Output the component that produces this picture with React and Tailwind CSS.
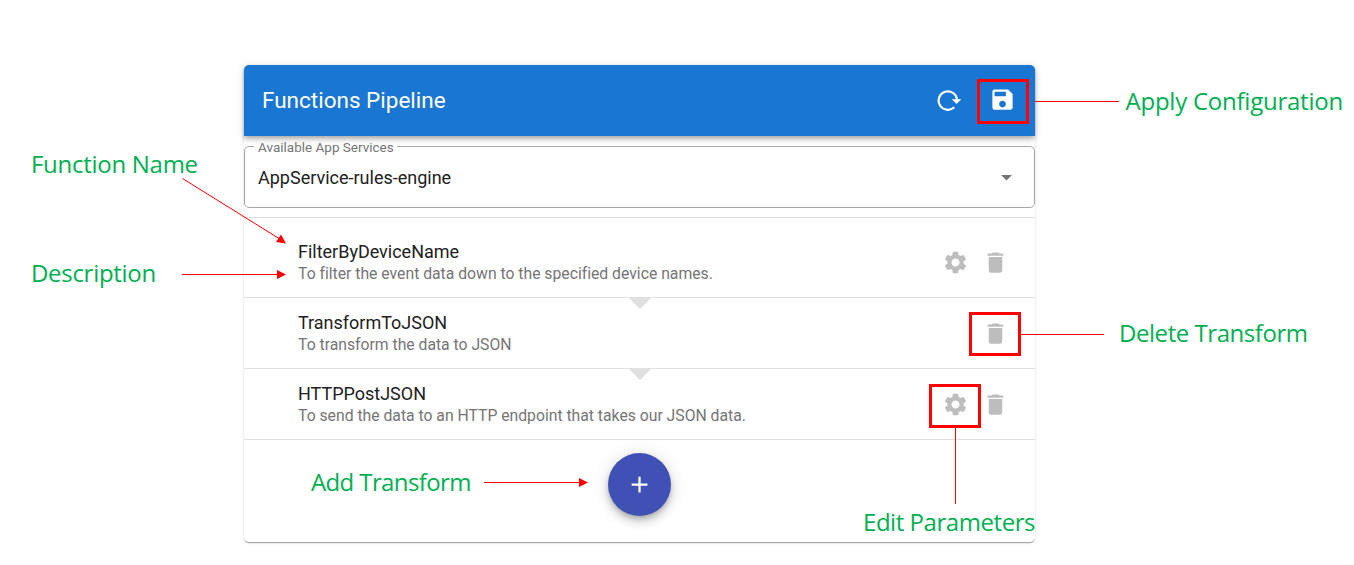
import { MdAdd, MdDelete, MdSave, MdSettings } from "react-icons/md";

const FUNCTIONS = [
  { name: "FilterByDeviceName", text: "To filter the event data down to the specified device names.", editable: true },
  { name: "TransformToJSON", text: "To transform the data to JSON", editable: false },
  { name: "HTTPPostJSON", text: "To send the data to an HTTP endpoint that takes our JSON data.", editable: true },
];

function ReloadIcon() {
  return (
    <svg width="24" height="24" viewBox="0 0 24 24" fill="none">
      <path d="M17.2 19.2A9.2 9.2 0 1 1 20 11.8" stroke="white" strokeWidth="2.2" />
      <path d="M14.8 11.2H24.2L19.5 16Z" fill="white" />
    </svg>
  );
}

function FunctionRow({ item, last }) {
  return (
    <li className="relative flex h-[71px] shrink-0 items-center border-b border-[#e0e0e0] pl-[54px] pr-[26px]">
      <div className="flex-1 pb-[3px]">
        <p className="text-[18px] leading-[26px] tracking-[-0.01px] text-[#212121]">{item.name}</p>
        <p className="text-[15.75px] leading-[18px] tracking-[-0.01px] text-[#757575]">{item.text}</p>
      </div>
      <div className="flex items-center gap-[13px] text-[#bdbdbd]">
        {item.editable && <MdSettings size={27} />}
        <MdDelete size={27} />
      </div>
      {!last && (
        <svg className="absolute left-[383.5px] top-[70px]" width="24" height="12" viewBox="0 0 24 12">
          <path d="M0 0H24L12 12Z" fill="#e0e0e0" />
        </svg>
      )}
    </li>
  );
}

function Pipeline() {
  return (
    <section className="flex h-[477px] w-[790.5px] flex-col rounded-[5px] bg-white shadow-[0_2px_1px_-1px_rgba(0,0,0,0.2),0_1px_1px_rgba(0,0,0,0.14),0_1px_3px_rgba(0,0,0,0.12)]">
      <header className="flex h-[71.5px] shrink-0 items-center rounded-t-[5px] bg-[#1976d2] pb-px pl-[18px] pr-[19px] text-white shadow-[0_2px_4px_-1px_rgba(0,0,0,0.2),0_4px_5px_rgba(0,0,0,0.14),0_1px_10px_rgba(0,0,0,0.12)]">
        <h1 className="flex-1 text-[22.5px] leading-9">Functions Pipeline</h1>
        <div className="flex items-center gap-[28px]">
          <ReloadIcon />
          <MdSave size={27} />
        </div>
      </header>
      <div className="h-[82px] shrink-0 border-b border-[#e0e0e0]">
        <fieldset className="mt-[2px] h-[70px] rounded-[5px] border border-[#a6a6a6] pl-[9px] pr-[10px]">
          <legend className="pl-[4px] pr-[3px] text-[13.5px] leading-[16px] text-[#757575]">
            <span className="relative top-px">Available App Services</span>
          </legend>
          <div className="flex h-[47px] items-center justify-between pl-[4px] pr-[12px]">
            <span className="text-[18px] text-[#212121]">AppService-rules-engine</span>
            <svg width="11" height="6" viewBox="0 0 11 6"><path d="M0 0H11L5.5 5.5Z" fill="#757575" /></svg>
          </div>
        </fieldset>
      </div>
      <ul className="flex flex-col pt-[9px]">
        {FUNCTIONS.map((item, i) => (
          <FunctionRow key={item.name} item={item} last={i === FUNCTIONS.length - 1} />
        ))}
      </ul>
      <div className="flex justify-center pt-[13px]">
        <button className="flex size-[63px] items-center justify-center rounded-full bg-[#3f51b5] text-white shadow-[0_3px_5px_-1px_rgba(0,0,0,0.2),0_6px_10px_rgba(0,0,0,0.14),0_1px_18px_rgba(0,0,0,0.12)]">
          <MdAdd size={27} />
        </button>
      </div>
    </section>
  );
}

function Callouts() {
  const label = "absolute whitespace-nowrap font-['Open_Sans','Noto_Sans',sans-serif] text-[24px] leading-8 text-[#00b050]";
  return (
    <div className="absolute inset-0">
      <svg className="absolute inset-0" width="1354" height="565" viewBox="0 0 1354 565" fill="none">
        <g stroke="#ff0000">
          <path d="M182.5 178.5L279 238.5M182 274.5H278M484 482.5H580M1035 101.5H1119M1021 334.5H1104M955.5 428V504" />
          <path strokeWidth="3" d="M978.5 80.5H1027.5V122.5H978.5ZM970.5 313.5H1019.5V354.5H970.5ZM930.5 385.5H979.5V426.5H930.5Z" />
        </g>
        <path fill="#ff0000" d="M286 243.5L276 242L281 234.5ZM286 274.5L277 270V279ZM588 482.5L579 478V487Z" />
      </svg>
      <span className={`${label} left-[31px] top-[148px] tracking-[-0.28px]`}>Function Name</span>
      <span className={`${label} left-[31px] top-[257px] tracking-[-0.3px]`}>Description</span>
      <span className={`${label} left-[311px] top-[466px] tracking-[-0.62px]`}>Add Transform</span>
      <span className={`${label} left-[863px] top-[506px] tracking-[-0.45px]`}>Edit Parameters</span>
      <span className={`${label} left-[1125.5px] top-[85px] tracking-[-0.24px]`}>Apply Configuration</span>
      <span className={`${label} left-[1119px] top-[317px] tracking-[-0.45px]`}>Delete Transform</span>
    </div>
  );
}

export default function App() {
  return (
    <main className="relative flex h-[565px] w-[1354px] overflow-hidden bg-white pl-[244px] pt-[64.5px] font-[Roboto,sans-serif]">
      <Pipeline />
      <Callouts />
    </main>
  );
}
